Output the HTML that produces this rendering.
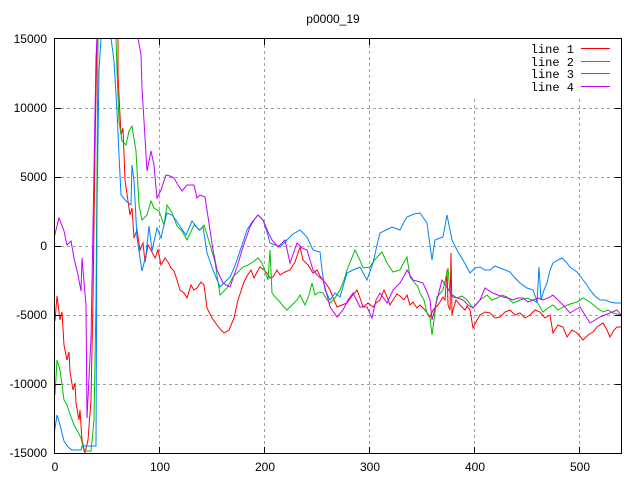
<!DOCTYPE html>
<html><head><meta charset="utf-8"><style>
html,body{margin:0;padding:0;background:#fff}
svg{display:block}
text{font-family:"Liberation Sans",sans-serif;font-size:12px;fill:#000}
.lg{font-family:"Liberation Mono",monospace;font-size:12px}
</style></head><body>
<svg width="640" height="480" viewBox="0 0 640 480" xmlns="http://www.w3.org/2000/svg">
<rect width="640" height="480" fill="#fff"/>
<defs><clipPath id="c"><rect x="54.5" y="38.5" width="567" height="415"/></clipPath></defs>
<g stroke="#a0a0a0" stroke-dasharray="3,3" stroke-width="1">
<line x1="55" y1="108.5" x2="621" y2="108.5"/>
<line x1="55" y1="177.5" x2="621" y2="177.5"/>
<line x1="55" y1="246.5" x2="621" y2="246.5"/>
<line x1="55" y1="315.5" x2="621" y2="315.5"/>
<line x1="55" y1="384.5" x2="621" y2="384.5"/>
<line x1="159.5" y1="39" x2="159.5" y2="453"/>
<line x1="264.5" y1="39" x2="264.5" y2="453"/>
<line x1="369.5" y1="39" x2="369.5" y2="453"/>
<line x1="474.5" y1="99" x2="474.5" y2="453"/>
<line x1="579.5" y1="99" x2="579.5" y2="453"/>
</g>
<g fill="none" stroke-width="1" clip-path="url(#c)" stroke-linejoin="miter">
<polyline stroke="#ff0000" points="55,321 57,296 60,320 62,312 64,345 67,360 69,352 70,372 73,390 75,383 76,403 79,420 80,410 82,440 85,453 88,440 91,400 93,300 95,150 97,38 118,38 118,75 121,135 123,128 125,180 130,215 132,208 134,238 137,230 140,250 143,243 145,262 148,245 152,252 155,258 158,250 161,265 165,258 168,262 171,268 174,271 177,280 180,290 184,293 187,298 191,285 194,290 197,288 201,282 204,285 207,308 212,318 217,325 221,330 224,333 229,330 234,318 238,300 241,291 244,282 247,276 251,270 254,278 257,272 260,267 264,270 267,273 270,278 273,277 277,270 280,275 285,272 290,270 295,262 300,247 303,260 308,265 313,273 317,270 320,276 323,280 327,285 330,290 334,300 337,307 342,305 347,303 352,296 357,290 360,298 363,307 368,303 373,307 377,302 380,300 384,290 387,297 390,305 393,300 397,294 400,296 404,300 407,295 410,305 413,302 417,308 420,305 425,310 430,317 433,310 438,305 443,297 445,300 447,270 448,305 450,310 451,253 452,315 453,310 456,300 460,305 465,310 467,306 470,310 473,328 477,320 480,315 485,312 490,313 495,318 500,317 505,312 510,310 515,315 520,313 525,318 530,315 535,310 540,312 545,318 550,315 553,333 558,325 563,327 567,337 572,330 577,333 583,340 588,335 593,332 597,327 603,323 607,330 610,337 614,330 617,327 621,327"/>
<polyline stroke="#00c000" points="55,395 57,360 60,370 64,400 67,405 70,414 74,425 78,432 81,438 84,451 91,451 94,420 96,300 98,38 116,38 117,71 119,121 122,141 126,145 129,131 132,126 136,151 139,205 142,220 147,215 151,201 154,208 159,211 164,225 167,205 172,213 177,226 182,231 187,240 194,225 200,230 204,225 208,238 211,248 215,262 217,275 220,295 227,288 233,277 238,272 243,267 248,265 253,262 258,258 262,263 268,280 270,250 272,293 276,298 280,302 283,306 287,310 292,305 297,300 300,295 305,305 309,295 312,283 315,295 319,292 323,293 327,300 330,303 335,298 340,290 344,280 347,270 351,260 355,250 359,258 363,268 370,267 373,262 378,256 382,252 387,263 393,272 400,270 404,262 407,257 410,277 414,282 418,287 420,293 424,300 427,313 430,318 432,335 434,320 437,297 443,290 448,268 450,293 457,298 462,296 467,300 473,308 480,300 487,295 492,300 497,298 502,295 507,297 513,303 520,300 527,298 532,300 537,302 543,312 548,308 553,305 558,310 563,307 570,304 577,302 583,298 590,302 597,308 603,312 608,310 613,313 621,315"/>
<polyline stroke="#0080ff" points="54,435 57,415 60,425 64,441 68,447 72,450 81,450 82,446 96,446 97,208 99,71 101,38 111,38 114,61 117,111 119,155 121,195 126,201 131,205 132,165 134,181 137,238 142,271 146,255 149,226 152,251 157,228 161,238 164,225 167,213 172,215 176,220 179,225 186,235 192,221 199,230 203,227 207,253 213,270 220,287 225,282 230,277 234,268 237,260 242,245 247,230 252,222 258,215 263,220 267,232 270,243 275,245 280,247 287,240 293,234 300,230 307,237 313,250 320,252 322,270 325,290 330,300 335,293 340,297 347,273 353,270 360,267 367,280 373,263 377,245 380,233 386,230 392,227 400,230 404,222 407,217 414,214 420,213 427,223 432,260 435,240 440,238 443,237 447,215 452,240 458,252 463,260 470,273 475,268 480,267 485,270 490,270 495,266 500,268 505,270 510,272 515,278 520,283 527,288 533,290 536,298 537,303 539,267 541,300 544,290 547,283 550,270 553,263 558,260 562,258 566,262 570,267 577,272 583,280 587,285 590,290 595,296 600,300 605,300 610,302 615,303 621,303"/>
<polyline stroke="#c000ff" points="54,238 59,218 64,231 67,245 71,241 74,258 78,275 81,291 82,258 86,305 87,418 91,338 94,171 96,58 97,38 138,38 141,55 142,88 144,121 147,171 151,151 154,165 157,198 161,190 166,175 170,176 174,178 178,185 182,191 187,185 194,185 197,198 200,195 205,197 210,230 213,250 217,270 223,283 230,287 237,267 243,247 250,227 254,220 258,215 263,220 268,232 272,240 278,247 285,240 290,263 297,243 302,248 307,250 313,270 318,276 323,280 327,295 330,307 337,317 343,310 348,300 353,293 360,307 367,307 372,318 376,300 380,293 387,303 393,290 400,283 404,276 407,270 413,280 420,282 423,283 427,292 430,300 432,320 437,300 442,280 447,287 453,297 458,298 463,300 468,305 473,308 480,300 485,288 493,293 498,295 503,297 508,298 513,300 518,298 523,298 528,302 533,300 538,298 543,300 548,298 553,295 558,300 563,305 570,313 575,310 580,307 585,315 590,323 595,320 600,317 605,315 610,313 617,310 621,315"/>
</g>
<rect x="54.5" y="38.5" width="567" height="415" fill="none" stroke="#000" stroke-width="1"/>
<g stroke="#000">
<line x1="55" y1="108.5" x2="61" y2="108.5"/><line x1="615" y1="108.5" x2="621" y2="108.5"/>
<line x1="55" y1="177.5" x2="61" y2="177.5"/><line x1="615" y1="177.5" x2="621" y2="177.5"/>
<line x1="55" y1="246.5" x2="61" y2="246.5"/><line x1="615" y1="246.5" x2="621" y2="246.5"/>
<line x1="55" y1="315.5" x2="61" y2="315.5"/><line x1="615" y1="315.5" x2="621" y2="315.5"/>
<line x1="55" y1="384.5" x2="61" y2="384.5"/><line x1="615" y1="384.5" x2="621" y2="384.5"/>
<line x1="159.5" y1="453" x2="159.5" y2="447"/><line x1="159.5" y1="39" x2="159.5" y2="45"/>
<line x1="264.5" y1="453" x2="264.5" y2="447"/><line x1="264.5" y1="39" x2="264.5" y2="45"/>
<line x1="369.5" y1="453" x2="369.5" y2="447"/><line x1="369.5" y1="39" x2="369.5" y2="45"/>
<line x1="474.5" y1="453" x2="474.5" y2="447"/>
<line x1="579.5" y1="453" x2="579.5" y2="447"/>
</g>
<g text-anchor="end">
<text x="47" y="43">15000</text>
<text x="47" y="112">10000</text>
<text x="47" y="181">5000</text>
<text x="47" y="250">0</text>
<text x="47" y="319">-5000</text>
<text x="47" y="388">-10000</text>
<text x="47" y="457">-15000</text>
</g>
<g text-anchor="middle">
<text x="55" y="471">0</text>
<text x="160" y="471">100</text>
<text x="265" y="471">200</text>
<text x="370" y="471">300</text>
<text x="475" y="471">400</text>
<text x="580" y="471">500</text>
<text x="333" y="23">p0000_19</text>
</g>
<g text-anchor="end" class="lg">
<text class="lg" x="574" y="53">line 1</text>
<text class="lg" x="574" y="66">line 2</text>
<text class="lg" x="574" y="78">line 3</text>
<text class="lg" x="574" y="91">line 4</text>
</g>
<g stroke-width="1">
<line x1="581" y1="48.5" x2="610" y2="48.5" stroke="#ff0000"/>
<line x1="581" y1="61.5" x2="610" y2="61.5" stroke="#00c000"/>
<line x1="581" y1="73.5" x2="610" y2="73.5" stroke="#0080ff"/>
<line x1="581" y1="86.5" x2="610" y2="86.5" stroke="#c000ff"/>
</g>
</svg>
</body></html>
